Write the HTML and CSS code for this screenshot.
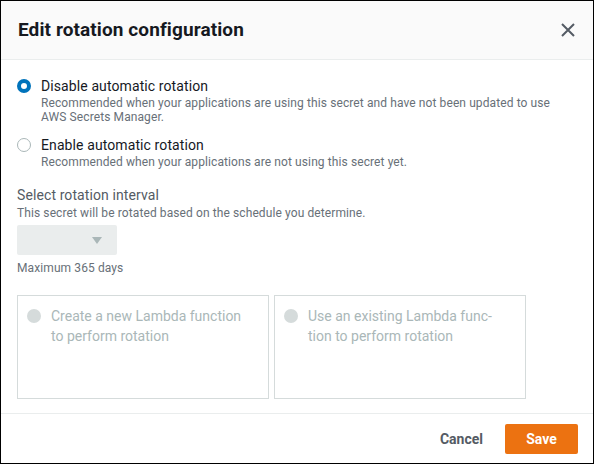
FILE: index.html
```html
<!DOCTYPE html>
<html lang="en">
<head>
<meta charset="utf-8">
<title>Edit rotation configuration</title>
<link rel="stylesheet" href="styles.css">
</head>
<body>
<div class="modal">
  <header class="modal-header">
    <h1 class="modal-title">Edit rotation configuration</h1>
    <button class="close-btn" aria-label="Close">
      <svg width="14" height="14" viewBox="0 0 14 14"><path d="M1 1 L13 13 M13 1 L1 13" stroke="#545b64" stroke-width="2" fill="none"/></svg>
    </button>
  </header>
  <main class="modal-body">
    <div class="radio-group">
      <label class="radio-option">
        <span class="radio radio-checked"></span>
        <span class="radio-text">
          <span class="radio-label">Disable automatic rotation</span>
          <span class="radio-desc">Recommended when your applications are using this secret and have not been updated to use AWS Secrets Manager.</span>
        </span>
      </label>
      <label class="radio-option option-second">
        <span class="radio"></span>
        <span class="radio-text">
          <span class="radio-label">Enable automatic rotation</span>
          <span class="radio-desc">Recommended when your applications are not using this secret yet.</span>
        </span>
      </label>
    </div>
    <div class="field">
      <div class="field-label">Select rotation interval</div>
      <div class="field-desc">This secret will be rotated based on the schedule you determine.</div>
      <div class="select-box"><span class="select-caret"></span></div>
      <div class="field-hint">Maximum 365 days</div>
    </div>
    <div class="tiles">
      <div class="tile">
        <span class="tile-radio"></span>
        <span class="tile-text">Create a new Lambda function to perform rotation</span>
      </div>
      <div class="tile">
        <span class="tile-radio"></span>
        <span class="tile-text">Use an existing Lambda func&shy;tion to perform rotation</span>
      </div>
    </div>
  </main>
  <footer class="modal-footer">
    <button class="btn-link">Cancel</button>
    <button class="btn-primary">Save</button>
  </footer>
</div>
</body>
</html>
```
FILE: styles.css
```css
* { box-sizing: border-box; }
html, body { margin: 0; padding: 0; }
body {
  font-family: Roboto, "Liberation Sans", sans-serif;
  color: #16191f;
  background: #fff;
}
.modal {
  width: 594px;
  height: 464px;
  border: 1px solid #000;
  display: flex;
  flex-direction: column;
  background: #fff;
}
.modal-header {
  height: 59px;
  flex: none;
  background: #fafafa;
  border-bottom: 1px solid #eaeded;
  display: flex;
  align-items: center;
  justify-content: space-between;
  padding: 0 18px 0 17px;
}
.modal-title {
  margin: 0;
  font-size: 19px;
  font-weight: 700;
  line-height: 22px;
  letter-spacing: 0.1px;
  color: #16191f;
}
.close-btn {
  border: 0;
  background: none;
  padding: 0;
  width: 14px;
  height: 14px;
  display: flex;
}
.modal-body {
  flex: 1;
  padding: 16px 16px 0 16px;
}
.radio-option {
  display: flex;
  align-items: flex-start;
  gap: 10px;
}
.option-second { margin-top: 11px; }
.radio {
  flex: none;
  width: 14px;
  height: 14px;
  margin-top: 3px;
  border-radius: 50%;
  border: 1px solid #aab7b8;
  background: #fff;
}
.radio-checked {
  border: 4px solid #0073bb;
}
.radio-text {
  display: flex;
  flex-direction: column;
}
.radio-label {
  font-size: 14px;
  line-height: 20px;
  letter-spacing: 0.1px;
  color: #16191f;
}
.radio-desc {
  max-width: 522px;
  font-size: 12px;
  line-height: 14px;
  letter-spacing: 0.1px;
  color: #687078;
}
.field { margin-top: 16px; }
.field-label {
  font-size: 14px;
  line-height: 20px;
  letter-spacing: 0.1px;
  color: #545b64;
}
.field-desc {
  font-size: 12px;
  line-height: 16px;
  letter-spacing: 0.1px;
  color: #687078;
}
.select-box {
  margin-top: 4px;
  width: 100px;
  height: 30px;
  background: #eaeded;
  border-radius: 2px;
  display: flex;
  align-items: center;
  justify-content: flex-end;
  padding-right: 15px;
}
.select-caret {
  width: 0;
  height: 0;
  border-left: 5px solid transparent;
  border-right: 5px solid transparent;
  border-top: 7px solid #aab7b8;
}
.field-hint {
  margin-top: 6px;
  font-size: 12px;
  line-height: 14px;
  letter-spacing: 0.1px;
  color: #687078;
}
.tiles {
  margin-top: 20px;
  display: grid;
  grid-template-columns: 252px 252px;
  gap: 5px;
}
.tile {
  height: 104px;
  border: 1px solid #d5dbdb;
  padding: 10px 10px 10px 9px;
  display: flex;
  align-items: flex-start;
  gap: 10px;
}
.tile-radio {
  flex: none;
  width: 14px;
  height: 14px;
  margin-top: 3px;
  border-radius: 50%;
  background: #d5dbdb;
}
.tile-text {
  max-width: 200px;
  font-size: 14px;
  line-height: 20px;
  color: #aab7b8;
  hyphens: manual;
}
.modal-footer {
  height: 50px;
  flex: none;
  border-top: 1px solid #eaeded;
  display: flex;
  justify-content: flex-end;
  align-items: flex-start;
  padding: 10px 15px 0 0;
  gap: 2px;
}
.btn-link {
  border: 0;
  background: none;
  height: 30px;
  padding: 0 20px;
  font-family: inherit;
  font-size: 14px;
  font-weight: 700;
  color: #545b64;
}
.btn-primary {
  border: 0;
  background: #ec7211;
  height: 30px;
  width: 73px;
  border-radius: 2px;
  font-family: inherit;
  font-size: 14px;
  font-weight: 700;
  color: #fff;
}
```
